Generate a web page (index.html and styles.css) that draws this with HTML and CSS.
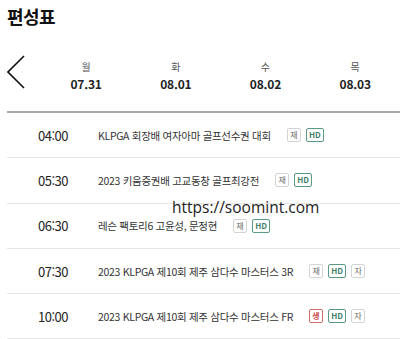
FILE: index.html
```html
<!DOCTYPE html>
<html lang="ko">
<head>
<meta charset="utf-8">
<link rel="stylesheet" href="styles.css">
</head>
<body>
<div class="page">
  <h1 class="title">편성표</h1>
  <div class="datebar">
    <button class="prev" aria-label="이전">
      <svg width="20" height="36" viewBox="0 0 20 36"><polyline points="17,1 1,17 17,33" fill="none" stroke="#111" stroke-width="1.6"/></svg>
    </button>
    <div class="days">
      <div class="day"><span class="dow">월</span><span class="date">07.31</span></div>
      <div class="day"><span class="dow">화</span><span class="date">08.01</span></div>
      <div class="day"><span class="dow">수</span><span class="date">08.02</span></div>
      <div class="day"><span class="dow">목</span><span class="date">08.03</span></div>
    </div>
  </div>
  <ul class="list">
    <li class="row"><span class="time">04:00</span><span class="name">KLPGA 회장배 여자아마 골프선수권 대회</span><span class="badge">재</span><span class="badge hd">HD</span></li>
    <li class="row"><span class="time">05:30</span><span class="name">2023 키움증권배 고교동창 골프최강전</span><span class="badge">재</span><span class="badge hd">HD</span></li>
    <li class="row"><span class="time">06:30</span><span class="name">레슨 팩토리6 고윤성, 문정현</span><span class="badge">재</span><span class="badge hd">HD</span></li>
    <li class="row"><span class="time">07:30</span><span class="name">2023 KLPGA 제10회 제주 삼다수 마스터스 3R</span><span class="badge">재</span><span class="badge hd">HD</span><span class="badge">자</span></li>
    <li class="row"><span class="time">10:00</span><span class="name">2023 KLPGA 제10회 제주 삼다수 마스터스 FR</span><span class="badge live">생</span><span class="badge hd">HD</span><span class="badge">자</span></li>
  </ul>
  <div class="watermark">https://soomint.com</div>
</div>
</body>
</html>
```
FILE: styles.css
```css
* { box-sizing: border-box; }
html, body { margin: 0; padding: 0; background: #fff; }
body { font-family: "Noto Sans CJK KR", "Noto Sans", sans-serif; color: #222; }
.page { position: relative; width: 400px; overflow: hidden; }
.title { margin: 0; padding: 4px 0 0 7px; font-size: 18px; font-weight: 700; line-height: 24px; color: #111; letter-spacing: -0.5px; }
.datebar { display: flex; height: 83px; align-items: stretch; }
.prev { width: 42px; padding: 0 0 0 7px; margin: 0; border: 0; background: none; display: flex; align-items: flex-start; justify-content: flex-start; }
.prev svg { display: block; margin-top: 27px; }
.days { display: grid; grid-template-columns: repeat(4, 89.7px); align-content: start; padding-top: 32px; }
.day { display: flex; flex-direction: column; align-items: center; }
.dow { font-size: 10px; line-height: 14px; color: #555; }
.date { font-size: 12px; font-weight: 700; line-height: 18px; color: #222; margin-top: 1px; letter-spacing: -0.2px; }
.list { list-style: none; margin: 0 0 0 7px; padding: 0; border-top: 2px solid #a8a8a8; }
.row { display: flex; align-items: center; height: 45.3px; border-bottom: 1px solid #e6e6e6; }
.time { width: 91px; padding-left: 31px; font-size: 13px; color: #222; letter-spacing: -0.5px; }
.name { font-size: 10.5px; color: #333; letter-spacing: -0.3px; margin-right: 16px; }
.badge { display: inline-flex; align-items: center; justify-content: center; min-width: 14px; height: 14px; padding: 0 2px; margin-right: 5px; border: 1px solid #d4d4d4; border-radius: 2px; font-size: 8px; color: #666; line-height: 1; }
.badge.hd { border-color: #5a9a84; color: #3f7f69; font-weight: 700; min-width: 18px; }
.badge.live { border-color: #d86a6a; color: #c84848; font-weight: 700; }
.watermark { position: absolute; left: 172px; top: 195px; font-family: "Open Sans", "Noto Sans", sans-serif; font-size: 15.5px; color: #222; line-height: 24px; }
```
